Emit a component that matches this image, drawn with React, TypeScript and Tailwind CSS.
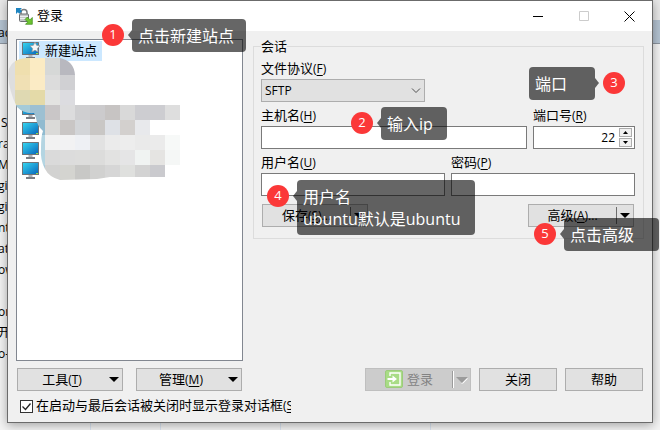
import { FC, ReactNode } from 'react';

const behindRows = [' S', 'ra', 'M', 'gin', 'gin', 'nt', 'at', 'ow', '', 'or', '开', 'o-'];

// Blurred part of the site list, in cells of 15px
const mosaic = [
    { x: 0, y: 45, colors: ['#dedede', '#efdfae', '#fbebc3', '#d6d8d7', '#b8b8bf'] },
    { x: 0, y: 60, colors: ['#dedede', '#efdfae', '#fbebc3', '#d6d8d7', '#b8b8bf'] },
    { x: 0, y: 75, colors: ['#dedede', '#f0e0b4', '#fbebc5', '#dcdcdc', '#d0d0d3'] },
    { x: 0, y: 90, colors: ['#dedede', '#dfd9b2', '#e4daa8', '#e3e3e1', '#dcdce0'] },
    { x: 15, y: 105, colors: ['#a5cbd9', '#9dc0d2', '#c9c6c7', '#dcdcdd', '#cfcfd1', '#cccbcd', '#c7c4c3', '#d9d9d9', '#cdcdd1', '#cdcdd1', '#dedede'] },
    { x: 15, y: 120, colors: ['#90bbd0', '#90bbd0', '#dadad8', '#c9c6c5', '#d3d5d8', '#c9c7c5', '#dee1e6', '#d3d0ce', '#e8e9ec'] },
    { x: 30, y: 135, colors: ['#b4d5e2', '#f2f2f2', '#f2f2f3', '#eef0f4', '#e2e2e2', '#ebebeb', '#ededed', '#eaeaea', '#ebebeb', '#f7f9f8'] },
    { x: 30, y: 150, colors: ['#b4d5e2', '#dadada', '#dcdcdc', '#dddddc', '#dcdcdb', '#e2e2e1', '#e5e5e6', '#f0f3f2', '#e5e4e2', '#f5f7f6'] },
    { x: 30, y: 165, colors: ['#a9cbdc', '#d2d2d1', '#d4d4d0', '#c8c8c6', '#d1d1d0', '#d6d6d6', '#dfe0de', '#d3d3d3', '#cacace'] },
];

const Mosaic: FC = () => (
    <svg className="absolute left-0 top-0 z-10" width="190" height="185" aria-hidden="true">
        <clipPath id="smear">
            <path d="M8 74 Q9 62 20 59 L26 58 H60 Q74 61 75 75 V105 H180 V165 H165 V177 L130 177 L110 177 L97 179 L60 180 Q49 177 45 169 Q40 160 41 148 Q41 136 43 131 Q37 126 36 118 L34 113 Q24 114 17 107 Q9 92 8 74Z" />
        </clipPath>
        <g clipPath="url(#smear)" shapeRendering="crispEdges">
            {mosaic.map((row) =>
                row.colors.map((color, i) => (
                    <rect key={`${row.y}-${i}`} x={row.x + i * 15} y={row.y} width="15" height="15" fill={color} />
                ))
            )}
        </g>
    </svg>
);

const AppIcon: FC = () => (
    <svg width="17" height="17" viewBox="0 0 17 17" aria-hidden="true">
        <path d="M5 7V4.4a3 3 0 0 1 6 0V7" fill="none" stroke="#777a7d" strokeWidth="1.5" />
        <rect x="3.5" y="6" width="9" height="7.5" rx="1" fill="#c4c6c8" stroke="#6b6e71" />
        <path d="M4 8.5h8M4 10.5h8" stroke="#eceeef" />
        <path d="M0 0h6L4.4 1.6 6 3.2 3.4 5.8 1.8 4.2 0 6z" fill="#1d84c0" />
        <path d="M16.3 16.3H9.5l2.2-2.2L9 11.4l2.3-2.3 2.7 2.7 2.3-2.3z" fill="#6cc330" stroke="#3d8a1b" strokeWidth=".7" />
    </svg>
);

const Monitor: FC<{ star?: boolean }> = ({ star }) => (
    <svg width="18" height="18" viewBox="0 0 18 18" aria-hidden="true">
        <defs>
            <linearGradient id="screen" x1="0" y1="0" x2="1" y2="1">
                <stop offset="0" stopColor="#35d3ee" />
                <stop offset="1" stopColor="#0868bd" />
            </linearGradient>
        </defs>
        <path d="M6.5 13h4v2h-4z" fill="#b0b3b8" />
        <path d="M4 15.2h9v1.6H4z" fill="#5b5e66" />
        <rect x="0" y="0" width="17" height="13" rx=".5" fill="#6f7378" />
        <rect x="1" y="1" width="15" height="11" fill="url(#screen)" />
        <path d="M14 11h2v1h-2z" fill="#8ee04d" />
        {star && (
            <path d="M13 0l1.6 3.3 3.4.5-2.5 2.6.6 3.6-3.1-1.8L9.9 10l.6-3.6L8 3.8l3.4-.5z" fill="#f6f6f6" stroke="#8b8f94" strokeWidth=".7" />
        )}
    </svg>
);

const LoginIcon: FC = () => (
    <svg width="18" height="18" viewBox="0 0 18 18" aria-hidden="true">
        <rect x=".5" y=".5" width="17" height="17" rx="1.5" fill="#a9dc86" stroke="#9ccb7c" />
        <path d="M5 6V3h10v12H5v-3" fill="none" stroke="#fff" strokeWidth="1.4" />
        <path d="M2.5 8h5V5.5L12 9l-4.5 3.5V10h-5z" fill="#fff" />
    </svg>
);

const Triangle: FC<{ muted?: boolean }> = ({ muted }) => (
    <svg width="12" height="8" viewBox="0 0 12 8" aria-hidden="true">
        {muted && <path d="M5 7.5L11.5 1v2L7 7.5z" fill="#fff" />}
        <path d={muted ? 'M0 1h12L6 7z' : 'M1 1h10L6 6z'} fill={muted ? '#9b9b9b' : '#000'} />
    </svg>
);

const Key: FC<{ letter: string; after?: string }> = ({ letter, after }) => (
    <span className="text-xs">
        (<u className="underline-offset-2">{letter}</u>){after}
    </span>
);

const MenuButton: FC<{ children: ReactNode; split?: boolean; disabled?: boolean }> = ({ children, split, disabled }) => (
    <button
        type="button"
        disabled={disabled}
        className="flex h-[23px] w-[106px] shrink-0 items-center border border-[#adadad] bg-[#e1e1e1] leading-[18px] disabled:border-[#bfbfbf] disabled:bg-[#cccccc] disabled:text-[#838383]"
    >
        <span className="flex h-5 flex-1 justify-center gap-1">{children}</span>
        {split && <span className={disabled ? 'h-[17px] w-0.5 border-l border-[#9b9b9b] bg-white' : 'h-[17px] w-px bg-[#6d6d6d]'}></span>}
        <span className="flex w-4 justify-center">
            <Triangle muted={disabled} />
        </span>
    </button>
);

const PlainButton: FC<{ children: ReactNode }> = ({ children }) => (
    <button type="button" className="h-[23px] w-[78px] border border-[#adadad] bg-[#e1e1e1] pb-0.5 leading-[18px]">
        {children}
    </button>
);

const labelClass = 'block h-5 leading-[18px]';
const inputClass = 'h-[23px] w-full border border-[#7a7a7a] bg-white px-1 text-xs outline-none';

const Note: FC<{ step: number; className: string; boxClass?: string; flip?: boolean; children: ReactNode }> = ({
    step,
    className,
    boxClass,
    flip,
    children,
}) => (
    <div className={`absolute z-20 flex items-start ${flip ? 'flex-row-reverse' : ''} ${className}`}>
        <span className="mt-[5px] flex size-[22px] items-center justify-center rounded-full bg-[#fb3838] pb-0.5 text-[13px] leading-4 text-white">
            {step}
        </span>
        <svg className={flip ? 'mr-1 mt-[10px] -scale-x-100' : 'ml-1 mt-[10px]'} width="4" height="12" viewBox="0 0 4 12" aria-hidden="true">
            <path d="M4 1v10L0 6z" fill="#000" fillOpacity=".6" />
        </svg>
        <div className={`whitespace-nowrap rounded bg-black/60 pb-[5px] pl-1.5 pr-3 pt-1.5 text-base leading-[22px] text-white ${boxClass ?? 'min-w-[66px]'}`}>
            {children}
        </div>
    </div>
);

const App: FC = () => {
    return (
        <div className="relative flex min-h-screen items-start overflow-hidden bg-[#f4f4f4] font-['Open_Sans','Noto_Sans_CJK_SC',sans-serif] text-[13px] leading-5 text-black">
            {/* Window behind the dialog */}
            <div className="absolute inset-x-0 top-0 h-11 border-b border-[#8d959f] bg-[#e9e9e9] pt-5">
                <div className="h-full bg-[#b4c3d2]"></div>
            </div>
            <div className="absolute inset-x-0 bottom-0 h-2">
                <div className="flex h-full">
                    <span className="w-[91px] border-r border-[#dbe5f1]"></span>
                    <span className="w-[70px] border-r border-[#dbe5f1]"></span>
                    <span className="w-[120px] border-r border-[#dbe5f1]"></span>
                    <span className="w-[150px] border-r border-[#dbe5f1]"></span>
                </div>
            </div>
            <div className="relative w-[7px] shrink-0 overflow-hidden pt-[22px] text-xs leading-[21px]">
                <p className="-ml-0.5">ac</p>
                <div className="mt-[69px]">
                    {behindRows.map((row, i) => (
                        <p key={i} className="-ml-0.5 h-[21px] whitespace-pre">{row}</p>
                    ))}
                </div>
            </div>

            {/* Dialog */}
            <main className="relative mr-[7px] min-w-0 flex-1 border border-[#6b6b6b] bg-[#f0f0f0] shadow-[0_2px_10px_rgba(0,0,0,0.35)]">
                <header className="flex h-[30px] items-center bg-white pl-2">
                    <AppIcon />
                    <h1 className="ml-1 h-5 flex-1 leading-[18px]">登录</h1>
                    <button type="button" aria-label="最小化" className="flex w-[46px] justify-center">
                        <svg width="10" height="10"><path d="M0 5.5h10" stroke="#000" /></svg>
                    </button>
                    <button type="button" aria-label="最大化" className="flex w-[45px] justify-center">
                        <svg width="10" height="10"><path d="M.5.5h9v9h-9z" fill="none" stroke="#ccc" /></svg>
                    </button>
                    <button type="button" aria-label="关闭窗口" className="flex w-[46px] justify-center">
                        <svg width="11" height="11"><path d="M.5.5l10 10M10.5.5l-10 10" stroke="#000" /></svg>
                    </button>
                </header>

                <div className="flex gap-2.5 px-2 pt-2">
                    {/* Site list */}
                    <ul className="h-[322px] w-[227px] shrink-0 border border-[#828790] bg-white px-0.5 pt-px">
                        <li className="flex h-5 w-[83px] items-center gap-[5px] bg-[#cce8ff] pl-[3px]">
                            <Monitor star />
                            <span className="h-5 leading-[18px]">新建站点</span>
                        </li>
                        <li className="h-10"></li>
                        {[1, 2, 3, 4].map((site) => (
                            <li key={site} className="flex h-5 items-center pl-[3px]">
                                <Monitor />
                            </li>
                        ))}
                    </ul>

                    {/* Session settings */}
                    <div className="min-w-0 flex-1">
                        <fieldset className="min-w-0 border border-[#dcdcdc] pb-[11px] pl-[7px] pr-2">
                            <legend className="leading-[14px]">会话</legend>
                            <div className="pt-1.5">
                                <label htmlFor="protocol" className={labelClass}>文件协议<Key letter="F" /></label>
                                <div className="grid w-[164px] items-center">
                                    <select id="protocol" className="h-[23px] appearance-none border border-[#adadad] bg-[#e1e1e1] px-[3px] text-xs [grid-area:1/1]">
                                        <option>SFTP</option>
                                    </select>
                                    <svg className="pointer-events-none mr-1 justify-self-end [grid-area:1/1]" width="10" height="6" aria-hidden="true">
                                        <path d="M1 .5l4 4 4-4" fill="none" stroke="#505050" />
                                    </svg>
                                </div>
                            </div>
                            <div className="mt-1 flex gap-1.5">
                                <div className="flex-1">
                                    <label htmlFor="host" className={labelClass}>主机名<Key letter="H" /></label>
                                    <input id="host" className={inputClass} />
                                </div>
                                <div className="w-[102px]">
                                    <label htmlFor="port" className={labelClass}>端口号<Key letter="R" /></label>
                                    <div className="flex h-[23px] items-center border border-[#7a7a7a] bg-white pr-0.5">
                                        <input id="port" defaultValue="22" className="w-full min-w-0 flex-1 pr-1 text-right text-xs outline-none" />
                                        <div className="flex flex-col gap-px">
                                            <button type="button" aria-label="增加" className="flex h-[9px] w-[13px] items-center justify-center border border-[#adadad] bg-[#f0f0f0]">
                                                <svg width="5" height="3"><path d="M0 3L2.5 0 5 3z" /></svg>
                                            </button>
                                            <button type="button" aria-label="减少" className="flex h-[9px] w-[13px] items-center justify-center border border-[#adadad] bg-[#f0f0f0]">
                                                <svg width="5" height="3"><path d="M0 0l2.5 3L5 0z" /></svg>
                                            </button>
                                        </div>
                                    </div>
                                </div>
                            </div>
                            <div className="mt-1 grid grid-cols-2 gap-1.5">
                                <div>
                                    <label htmlFor="user" className={labelClass}>用户名<Key letter="U" /></label>
                                    <input id="user" className={inputClass} />
                                </div>
                                <div>
                                    <label htmlFor="password" className={labelClass}>密码<Key letter="P" /></label>
                                    <input id="password" type="password" className={inputClass} />
                                </div>
                            </div>
                            <div className="mt-2 flex justify-between px-px">
                                <MenuButton split><span>保存<Key letter="S" after="..." /></span></MenuButton>
                                <MenuButton split><span>高级<Key letter="A" after="..." /></span></MenuButton>
                            </div>
                        </fieldset>
                    </div>
                </div>

                {/* Bottom buttons */}
                <div className="mt-[7px] flex justify-between px-[9px]">
                    <div className="flex gap-[13px]">
                        <MenuButton><span>工具<Key letter="T" /></span></MenuButton>
                        <MenuButton><span>管理<Key letter="M" /></span></MenuButton>
                    </div>
                    <div className="flex gap-2">
                        <MenuButton split disabled><LoginIcon />登录</MenuButton>
                        <PlainButton>关闭</PlainButton>
                        <PlainButton>帮助</PlainButton>
                    </div>
                </div>
                <label className="mb-1.5 ml-3 mt-[5px] flex w-[271px] items-center gap-[3px] overflow-hidden whitespace-nowrap">
                    <span className="grid shrink-0">
                        <input type="checkbox" defaultChecked className="size-[13px] appearance-none border border-[#333] bg-white [grid-area:1/1]" />
                        <svg className="pointer-events-none [grid-area:1/1]" width="13" height="13" aria-hidden="true">
                            <path d="M2.5 6.5l3 3 5-6" fill="none" stroke="#222" strokeWidth="1.3" />
                        </svg>
                    </span>
                    <span className="h-5 leading-[18px]">在启动与最后会话被关闭时显示登录对话框<Key letter="S" /></span>
                </label>
            </main>

            <Mosaic />

            {/* Numbered notes */}
            <Note step={1} className="left-[102px] top-[19px]">点击新建站点</Note>
            <Note step={2} className="left-[351px] top-[107px]">输入ip</Note>
            <Note step={3} className="right-[35px] top-[67px]" flip>端口</Note>
            <Note step={4} className="left-[267px] top-[180px]" boxClass="min-w-[178px]">
                用户名
                <br />
                ubuntu默认是ubuntu
            </Note>
            <Note step={5} className="right-px top-[218px]" boxClass="w-[95px]">点击高级</Note>
        </div>
    );
};

export default App;
